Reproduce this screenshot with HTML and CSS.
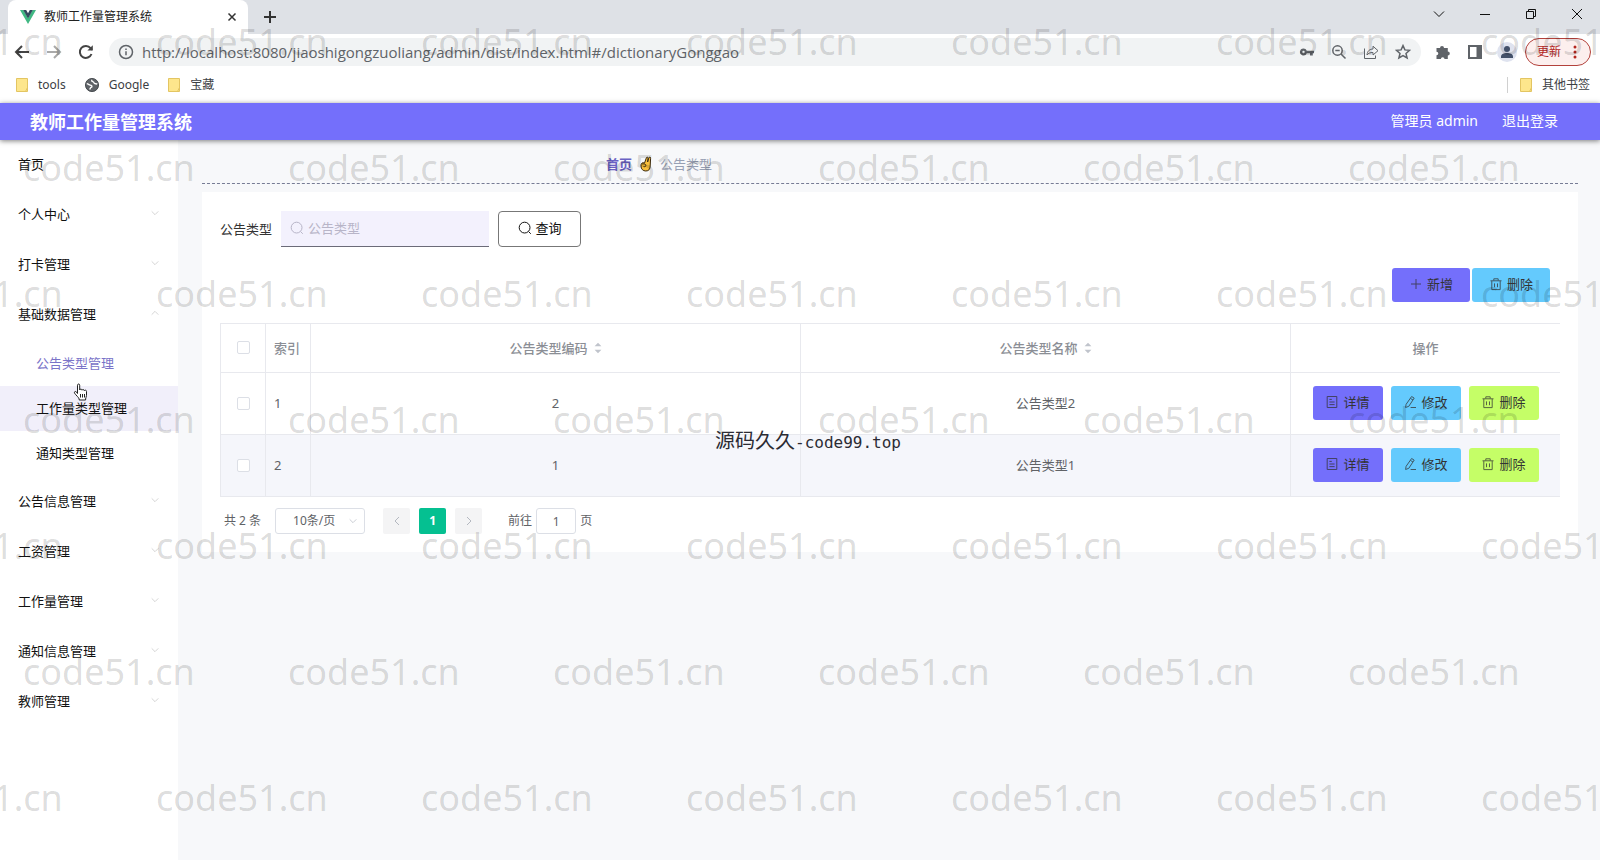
FILE: index.html
```html
<!DOCTYPE html>
<html lang="zh-CN">
<head>
<meta charset="utf-8">
<title>教师工作量管理系统</title>
<link rel="stylesheet" href="styles.css">
</head>
<body>
<svg class="sprite" aria-hidden="true">
  <symbol id="i-down" viewBox="0 0 12 12"><path d="M2 4l4 4 4-4"/></symbol>
  <symbol id="i-up" viewBox="0 0 12 12"><path d="M2 8l4-4 4 4"/></symbol>
  <symbol id="i-left" viewBox="0 0 12 12"><path d="M8 2L4 6l4 4"/></symbol>
  <symbol id="i-right" viewBox="0 0 12 12"><path d="M4 2l4 4-4 4"/></symbol>
  <symbol id="i-search" viewBox="0 0 14 14"><circle cx="6.600" cy="6.600" r="5.400"/><path d="M10.600 10.600l2.200 2.200"/></symbol>
  <symbol id="i-plus" viewBox="0 0 14 14"><path d="M7 2v10M2 7h10"/></symbol>
  <symbol id="i-trash" viewBox="0 0 14 14"><path d="M1.500 3.800h11M4.800 3.600V1.800h4.400v1.800M2.800 4v8.600h8.400V4M5.500 6.400v3.800M8.500 6.400v3.800"/></symbol>
  <symbol id="i-doc" viewBox="0 0 14 14"><path d="M2.200 1.500h9.600v11H2.200zM4.400 4.400h2.400M4.400 7h5.200M4.400 9.600h5.200"/></symbol>
  <symbol id="i-edit" viewBox="0 0 14 14"><path d="M8.600 1.500l2.600 1.600-5.400 8.200-3.200 1.200.5-3.200zM7.400 3.400l2.600 1.600M7.600 12.500h5.400"/></symbol>
  <symbol id="i-folder" viewBox="0 0 12 14"><path d="M.5.5h11v13H.5z" fill="#fde68c" stroke="#e3c562"/><path d="M9.500 13.500l2-4" stroke="#e3c562"/></symbol>
</svg>

<header class="browser">
  <div class="tabstrip">
    <div class="tab">
      <svg class="vue" viewBox="0 0 16 14"><path d="M0 0h3.400L8 8l4.600-8H16L8 14z" fill="#41b883"/><path d="M3.200 0h3L8 3.200 9.800 0h3L8 8.400z" fill="#34495e"/></svg>
      <span class="tab-title">教师工作量管理系统</span>
      <button class="plain" aria-label="关闭标签页"><svg class="ic10" viewBox="0 0 10 10"><path d="M1.500 1.500l7 7M8.500 1.500l-7 7"/></svg></button>
    </div>
    <button class="plain newtab" aria-label="新标签页"><svg class="ic14" viewBox="0 0 14 14"><path d="M7 1v12M1 7h12"/></svg></button>
    <div class="window-controls">
      <button class="plain" aria-label="搜索标签页"><svg viewBox="0 0 12 12"><path d="M1 3.500l5 5 5-5"/></svg></button>
      <button class="plain" aria-label="最小化"><svg viewBox="0 0 12 12"><path d="M1 6.500h10"/></svg></button>
      <button class="plain" aria-label="还原"><svg viewBox="0 0 12 12"><path d="M1.500 3.500h7v7h-7zM3.500 3.500v-2h7v7h-2"/></svg></button>
      <button class="plain" aria-label="关闭"><svg viewBox="0 0 12 12"><path d="M1 1l10 10M11 1L1 11"/></svg></button>
    </div>
  </div>
  <div class="toolbar">
    <div class="nav-buttons">
      <button class="plain" aria-label="后退"><svg viewBox="0 0 16 16"><path d="M15 8H2M8 2L2 8l6 6"/></svg></button>
      <button class="plain faded" aria-label="前进"><svg viewBox="0 0 16 16"><path d="M1 8h13M8 2l6 6-6 6"/></svg></button>
      <button class="plain" aria-label="刷新"><svg viewBox="0 0 16 16"><path d="M13.500 10A6 6 0 1 1 12.600 4.200L14 5.800"/><path d="M14.800 1.200v5.400H9.400z" class="solid"/></svg></button>
    </div>
    <div class="omnibox">
      <svg class="info" viewBox="0 0 16 16"><circle cx="8" cy="8" r="6.500"/><path d="M8 7.200v4M8 4.400v1.500"/></svg>
      <input class="url" aria-label="地址" value="http://localhost:8080/jiaoshigongzuoliang/admin/dist/index.html#/dictionaryGonggao">
      <button class="plain" aria-label="密码"><svg viewBox="0 0 16 16"><path class="solid" d="M4.500 4.500a3.500 3.500 0 1 0 3.300 4.700H11v2.300h2.800V9.200H15V6.800H7.800A3.500 3.500 0 0 0 4.500 4.500zm0 2.300a1.200 1.200 0 1 1 0 2.400 1.200 1.200 0 0 1 0-2.400z"/></svg></button>
      <button class="plain" aria-label="缩放"><svg class="thin" viewBox="0 0 16 16"><circle cx="6.500" cy="6.500" r="4.700"/><path d="M10 10l4.500 4.500M4.300 6.500h4.400"/></svg></button>
      <button class="plain" aria-label="分享"><svg class="fine" viewBox="0 0 16 16"><path d="M1.500 4.500v10h11v-3M4 11c.3-4 2.500-5.800 6-6V2.200L15 6.700l-5 4.300V8.500c-3 0-4.800.8-6 2.500z"/></svg></button>
      <button class="plain" aria-label="收藏"><svg class="thin" viewBox="0 0 16 16"><path d="M8 1.600l1.900 4.300 4.700.4-3.600 3.100 1.100 4.600L8 11.600 3.900 14 5 9.400 1.400 6.300l4.700-.4z"/></svg></button>
    </div>
    <div class="tools">
      <button class="plain" aria-label="扩展程序"><svg viewBox="0 0 16 16"><path class="solid" d="M1.500 4H5a2 2 0 1 1 4 0h3.800v3.600a2 2 0 1 1 0 4V15H9.500a1.800 1.800 0 1 0-3.600 0H1.500v-3.700a1.800 1.800 0 1 0 0-3.600z"/></svg></button>
      <button class="plain" aria-label="侧边栏"><svg viewBox="0 0 16 16"><path d="M2 2h12v12H2z"/><path class="solid" d="M9.500 2H15v12H9.500z"/></svg></button>
      <button class="plain avatar" aria-label="用户"><svg viewBox="0 0 16 16"><circle class="solid" cx="8" cy="5" r="3"/><path class="solid" d="M2 14v-1.500C2 10 5 9 8 9s6 1 6 3.500V14z"/></svg></button>
      <button class="update">更新<svg viewBox="0 0 4 14"><circle cx="2" cy="2" r="1.500"/><circle cx="2" cy="7" r="1.500"/><circle cx="2" cy="12" r="1.500"/></svg></button>
    </div>
  </div>
  <nav class="bookmarks" aria-label="书签">
    <a href="#"><svg class="folder"><use href="#i-folder"/></svg>tools</a>
    <a href="#"><svg class="globe" viewBox="0 0 16 16"><circle cx="8" cy="8" r="7.500" fill="#5f6368"/><path d="M2 6.500c2 .5 3 1.500 5 2 1.500.6 1 2-.2 2.200-.8.300-.6 1.800-1.600 2.300M8 2c-.6 1-.2 2 1 2.200 1.500.2 1 1.800 2.200 2.200 1 .3 1.800-.2 2.800.6" fill="none" stroke="#fff" stroke-width="1.600"/></svg>Google</a>
    <a href="#"><svg class="folder"><use href="#i-folder"/></svg>宝藏</a>
    <a href="#" class="other"><svg class="folder"><use href="#i-folder"/></svg>其他书签</a>
  </nav>
</header>

<header class="app-header">
  <h1>教师工作量管理系统</h1>
  <div class="user"><span>管理员 admin</span><a href="#">退出登录</a></div>
</header>

<div class="app">
  <nav class="sidebar" aria-label="主菜单">
    <a href="#" class="item">首页</a>
    <button class="item">个人中心<svg class="caret"><use href="#i-down"/></svg></button>
    <button class="item">打卡管理<svg class="caret"><use href="#i-down"/></svg></button>
    <button class="item">基础数据管理<svg class="caret"><use href="#i-up"/></svg></button>
    <div class="submenu">
      <a href="#" class="active">公告类型管理</a>
      <a href="#" class="hovered">工作量类型管理
        <svg class="pointer" viewBox="0 0 16 18"><path d="M4.500 10.500V2.200c0-1.600 2.200-1.600 2.200 0V7c.2-1.300 2.200-1.200 2.300.2.300-1 2.200-.9 2.300.5.400-.9 2.200-.7 2.200.7v4c0 1.600-.9 2.300-.9 3.600V17H6.200v-1C5.800 14.500 3 12.300 1.600 10.200c-.8-1.500.9-2.400 1.900-1.200z" fill="#fff" stroke="#222"/><path d="M7.500 11v3.500M9.500 11v3.500M11.500 11v3.500" stroke="#222"/></svg>
      </a>
      <a href="#">通知类型管理</a>
    </div>
    <button class="item">公告信息管理<svg class="caret"><use href="#i-down"/></svg></button>
    <button class="item">工资管理<svg class="caret"><use href="#i-down"/></svg></button>
    <button class="item">工作量管理<svg class="caret"><use href="#i-down"/></svg></button>
    <button class="item">通知信息管理<svg class="caret"><use href="#i-down"/></svg></button>
    <button class="item">教师管理<svg class="caret"><use href="#i-down"/></svg></button>
  </nav>

  <main class="content">
    <div class="breadcrumb">
      <a href="#">首页</a>
      <svg class="hand" viewBox="0 0 12 16"><path d="M1.500 7.500c.8-1 2-1 3-.4L6.300 2c.4-1.300 1.900-1 1.700.3L7.600 6l1.300-4.200c.4-1.200 1.900-.8 1.700.5L10.200 10c0 3-1.400 5-4.400 5C3 15 1 13 1 10.200c0-1.200 0-2 .5-2.700z" fill="#f8bf3c" stroke="#3a2a10"/><path d="M1.800 8c1.500-.4 4-.2 4 1.400S4.500 10.800 3.500 10.600" fill="none" stroke="#3a2a10"/></svg>
      <span>公告类型</span>
    </div>

    <section class="card">
      <form class="filter">
        <label for="kind">公告类型</label>
        <div class="search-box"><svg class="ic14"><use href="#i-search"/></svg><input id="kind" placeholder="公告类型"></div>
        <button type="button" class="query"><svg class="ic14"><use href="#i-search"/></svg>查询</button>
      </form>

      <div class="actions">
        <button class="btn wide violet"><svg class="ic14"><use href="#i-plus"/></svg>新增</button>
        <button class="btn wide sky"><svg class="ic14"><use href="#i-trash"/></svg>删除</button>
      </div>

      <table class="grid">
        <colgroup><col class="c-check"><col class="c-index"><col><col><col class="c-ops"></colgroup>
        <thead>
          <tr>
            <th class="check"><input type="checkbox" aria-label="全选"></th>
            <th class="index">索引</th>
            <th>公告类型编码<svg class="sort" viewBox="0 0 8 14"><path d="M0 5l4-4 4 4zM0 9l4 4 4-4z"/></svg></th>
            <th>公告类型名称<svg class="sort" viewBox="0 0 8 14"><path d="M0 5l4-4 4 4zM0 9l4 4 4-4z"/></svg></th>
            <th>操作</th>
          </tr>
        </thead>
        <tbody>
          <tr>
            <td class="check"><input type="checkbox" aria-label="选择第1行"></td>
            <td class="index">1</td><td>2</td><td>公告类型2</td>
            <td><div class="ops">
              <button class="btn violet"><svg class="ic14"><use href="#i-doc"/></svg>详情</button>
              <button class="btn sky"><svg class="ic14"><use href="#i-edit"/></svg>修改</button>
              <button class="btn lime"><svg class="ic14"><use href="#i-trash"/></svg>删除</button>
            </div></td>
          </tr>
          <tr class="striped">
            <td class="check"><input type="checkbox" aria-label="选择第2行"></td>
            <td class="index">2</td><td>1</td><td>公告类型1</td>
            <td><div class="ops">
              <button class="btn violet"><svg class="ic14"><use href="#i-doc"/></svg>详情</button>
              <button class="btn sky"><svg class="ic14"><use href="#i-edit"/></svg>修改</button>
              <button class="btn lime"><svg class="ic14"><use href="#i-trash"/></svg>删除</button>
            </div></td>
          </tr>
        </tbody>
      </table>

      <div class="pager">
        <span>共 2 条</span>
        <div class="size"><select aria-label="每页条数"><option>10条/页</option></select><svg><use href="#i-down"/></svg></div>
        <div class="pages">
          <button aria-label="上一页"><svg><use href="#i-left"/></svg></button>
          <button class="current">1</button>
          <button aria-label="下一页"><svg><use href="#i-right"/></svg></button>
        </div>
        <label class="jump">前往<input value="1">页</label>
      </div>
    </section>
  </main>
</div>

<div class="watermarks" aria-hidden="true">
  <div class="line shifted"><span>code51.cn</span><span>code51.cn</span><span>code51.cn</span><span>code51.cn</span><span>code51.cn</span><span>code51.cn</span><span>code51.cn</span></div>
  <div class="line"><span>code51.cn</span><span>code51.cn</span><span>code51.cn</span><span>code51.cn</span><span>code51.cn</span><span>code51.cn</span></div>
  <div class="line shifted"><span>code51.cn</span><span>code51.cn</span><span>code51.cn</span><span>code51.cn</span><span>code51.cn</span><span>code51.cn</span><span>code51.cn</span></div>
  <div class="line"><span>code51.cn</span><span>code51.cn</span><span>code51.cn</span><span>code51.cn</span><span>code51.cn</span><span>code51.cn</span></div>
  <div class="line shifted"><span>code51.cn</span><span>code51.cn</span><span>code51.cn</span><span>code51.cn</span><span>code51.cn</span><span>code51.cn</span><span>code51.cn</span></div>
  <div class="line"><span>code51.cn</span><span>code51.cn</span><span>code51.cn</span><span>code51.cn</span><span>code51.cn</span><span>code51.cn</span></div>
  <div class="line shifted"><span>code51.cn</span><span>code51.cn</span><span>code51.cn</span><span>code51.cn</span><span>code51.cn</span><span>code51.cn</span><span>code51.cn</span></div>
</div>
<div class="source-mark">源码久久<span>-code99.top</span></div>
</body>
</html>
```
FILE: styles.css
```css
* { box-sizing: border-box; }

body {
  margin: 0;
  min-height: 100vh;
  display: flex;
  flex-direction: column;
  position: relative;
  overflow: hidden;
  background: #f7f8fa;
  color: #222;
  font: 13px/20px "Noto Sans", "Noto Sans CJK SC", sans-serif;
}

button, input, select { font: inherit; color: inherit; margin: 0; }
button { cursor: pointer; }
a { color: inherit; text-decoration: none; }
svg { fill: none; stroke: currentColor; flex: none; }
.sprite { position: absolute; width: 0; height: 0; }
.solid { fill: currentColor; stroke: none; }
.ic10 { width: 10px; height: 10px; }
.ic14 { width: 14px; height: 14px; }

.plain {
  display: flex;
  align-items: center;
  justify-content: center;
  padding: 0;
  border: 0;
  background: none;
}

/* Browser frame */
.browser { background: #fff; font-size: 12px; }
.tabstrip { display: flex; height: 34px; padding-left: 8px; background: #dee1e6; }
.tab {
  display: flex;
  align-items: center;
  width: 240px;
  padding: 0 11px 0 12px;
  border-radius: 8px 8px 0 0;
  background: #fff;
}
.tab svg { stroke-width: 1.5; color: #333; }
.newtab svg { stroke-width: 2; color: #333; }
.tab .vue { width: 16px; height: 14px; margin-right: 8px; stroke: none; }
.tab-title { flex: 1; }
.newtab { width: 44px; }
.window-controls { display: flex; margin-left: auto; color: #111; }
.window-controls .plain { width: 46px; height: 28px; }
.window-controls svg { width: 12px; height: 12px; }

.toolbar { display: flex; align-items: center; height: 36px; padding: 0 9px 0 14px; color: #5f6368; }
.toolbar .plain svg, .info { width: 16px; height: 16px; stroke-width: 2; }
.toolbar .plain svg.thin, .info { stroke-width: 1.5; }
.toolbar .plain svg.fine { stroke-width: 1; }
.nav-buttons { display: flex; gap: 16px; padding-right: 15px; color: #444; }
.nav-buttons .faded { color: #aaa; }
.omnibox {
  flex: 1;
  display: flex;
  align-items: center;
  gap: 16px;
  height: 28px;
  padding: 0 10px 0 9px;
  border-radius: 14px;
  background: #f1f3f4;
}
.url {
  flex: 1;
  min-width: 0;
  margin-left: -8px;
  padding: 0;
  border: 0;
  outline: 0;
  background: none;
  font: 15px/20px "Open Sans", sans-serif;
}
.tools { display: flex; align-items: center; gap: 16px; padding-left: 14px; }
.tools .avatar { width: 20px; height: 20px; border-radius: 50%; background: #dfe3ef; color: #44516a; margin: 0 -8px 0 -2px; }
.update {
  display: flex;
  align-items: center;
  gap: 12px;
  width: 66px;
  height: 28px;
  padding: 0 11px;
  border: 1px solid #b3413b;
  border-radius: 14px;
  background: #fcefee;
  color: #b3261e;
  white-space: nowrap;
}
.update svg { width: 4px; height: 14px; fill: currentColor; stroke: none; }

.bookmarks { display: flex; align-items: center; gap: 19px; height: 33px; padding: 0 10px 4px 16px; color: #3c4043; font-size: 12px; }
.bookmarks a { display: flex; align-items: center; gap: 10px; }
.folder { width: 12px; height: 14px; }
.globe { width: 14px; height: 14px; }
.bookmarks .other { margin-left: auto; padding-left: 12px; border-left: 1px solid #d0d0d0; height: 16px; }

/* Application header */
.app-header {
  display: flex;
  align-items: center;
  justify-content: space-between;
  height: 37px;
  padding: 0 42px 0 30px;
  background: #746ffb;
  box-shadow: 0 1px 5px rgba(0, 0, 0, .5);
  color: #fff;
  z-index: 1;
}
.app-header h1 { margin: 0; font-size: 18px; line-height: 24px; font-weight: 700; }
.user { display: flex; gap: 24px; padding-bottom: 2px; font-size: 14px; }

.app { flex: 1; display: flex; }

/* Side menu */
.sidebar { width: 178px; background: #fff; color: #111; }
.item {
  display: flex;
  align-items: center;
  justify-content: space-between;
  width: 100%;
  height: 50px;
  padding: 0 18px 2px;
  border: 0;
  background: none;
  text-align: left;
}
.caret { width: 10px; height: 10px; margin-bottom: 3px; color: #ccc; }
.submenu { padding: 1px 0; }
.submenu a { display: flex; align-items: center; height: 45px; padding: 0 0 2px 36px; position: relative; }
.submenu .active { color: #7a73c8; }
.submenu .hovered { background: #f1effa; }
.pointer { position: absolute; left: 73px; top: -3px; width: 16px; height: 18px; }

/* Content */
.content { flex: 1; min-width: 0; padding: 0 22px 0 24px; }
.breadcrumb {
  display: flex;
  align-items: center;
  gap: 8px;
  height: 44px;
  padding: 5px 0 0 404px;
  border-bottom: 1px dashed #777c95;
  color: #97a0b4;
}
.breadcrumb a { color: #6a62c4; font-weight: 700; }
.hand { width: 12px; height: 16px; }

.card { margin-top: 8px; padding: 19px 18px 18px; background: #fff; }
.filter { display: flex; align-items: center; gap: 9px; }
.filter label { color: #333; }
.search-box {
  display: flex;
  align-items: center;
  gap: 4px;
  width: 208px;
  height: 36px;
  padding: 0 9px 1px;
  border-bottom: 1px solid #6b6b78;
  background: #f3f1fd;
  color: #b8b5c8;
}
.search-box input { flex: 1; min-width: 0; padding: 0; border: 0; outline: 0; background: none; color: #333; }
.search-box input::placeholder { color: #b8b5c8; opacity: 1; }
.query {
  display: flex;
  align-items: center;
  justify-content: center;
  gap: 4px;
  width: 83px;
  height: 36px;
  padding: 0 0 2px;
  border: 1px solid #777;
  border-radius: 4px;
  background: #fff;
  color: #111;
}

.actions { display: flex; justify-content: flex-end; gap: 2px; padding: 21px 10px; }
.btn {
  display: flex;
  align-items: center;
  justify-content: center;
  gap: 4px;
  width: 70px;
  height: 34px;
  padding: 0 0 2px;
  border: 0;
  border-radius: 3px;
  color: #333;
}
.btn svg { opacity: .75; }
.btn.wide { width: 78px; }
.violet { background: #746ffb; }
.sky { background: #64cafd; }
.lime { background: #c5fe67; }

.grid {
  width: 100%;
  table-layout: fixed;
  border-collapse: separate;
  border-spacing: 0;
  border-top: 1px solid #e8e9ee;
  border-left: 1px solid #e8e9ee;
  color: #606266;
}
.c-check, .c-index { width: 45px; }
.c-ops { width: 269px; }
.grid th, .grid td {
  height: 62px;
  padding: 0 0 1px;
  border-bottom: 1px solid #e8e9ee;
  border-right: 1px solid #e8e9ee;
  text-align: center;
}
.grid th { height: 49px; color: #8b8e95; font-weight: 500; }
.grid th:last-child, .grid td:last-child { border-right: 0; }
.grid .index { padding-left: 8px; text-align: left; }
.striped { background: #f5f6fb; }
.grid input {
  appearance: none;
  display: block;
  width: 13px;
  height: 13px;
  margin: 0 auto;
  border: 1px solid #dcdfe6;
  border-radius: 2px;
  background: #fff;
}
.sort { width: 8px; height: 12px; margin-left: 6px; vertical-align: -1px; fill: #c0c4cc; stroke: none; }
.ops { display: flex; justify-content: center; gap: 8px; }

.pager { display: flex; align-items: center; padding: 11px 4px 0; color: #606266; font-size: 12px; }
.size { position: relative; width: 90px; margin-left: 14px; }
.size select {
  appearance: none;
  display: block;
  width: 100%;
  height: 26px;
  padding: 0 17px;
  border: 1px solid #dcdfe6;
  border-radius: 3px;
  background: #fff;
}
.size svg { position: absolute; right: 7px; top: 8px; width: 10px; height: 10px; color: #c0c4cc; }
.pages { display: flex; gap: 9px; margin: 0 26px 0 18px; }
.pages button {
  display: flex;
  align-items: center;
  justify-content: center;
  width: 27px;
  height: 26px;
  padding: 0;
  border: 0;
  border-radius: 2px;
  background: #f4f4f5;
  color: #b4b8c0;
}
.pages svg { width: 12px; height: 12px; }
.pages .current { background: #05c091; color: #fff; font-weight: 700; }
.jump { display: flex; align-items: center; gap: 4px; }
.jump input { width: 40px; height: 26px; padding: 0; border: 1px solid #dcdfe6; border-radius: 3px; text-align: center; }

/* Overlaid marks */
.watermarks {
  position: absolute;
  inset: 0;
  overflow: hidden;
  pointer-events: none;
  z-index: 2;
  color: rgba(0, 0, 0, .15);
  font: 36px/50px "Noto Sans", sans-serif;
}
.line { display: flex; height: 126px; padding: 17px 0 0 23px; }
.line.shifted { margin-left: -132px; }
.line span { flex: 0 0 265px; }
.source-mark {
  position: absolute;
  left: 50%;
  top: 50%;
  margin-left: -85px;
  z-index: 3;
  color: #2b2b33;
  font: 20px/20px "Noto Sans CJK SC", sans-serif;
  white-space: nowrap;
}
.source-mark span { font: 16px/20px "DejaVu Sans Mono", monospace; }
```
